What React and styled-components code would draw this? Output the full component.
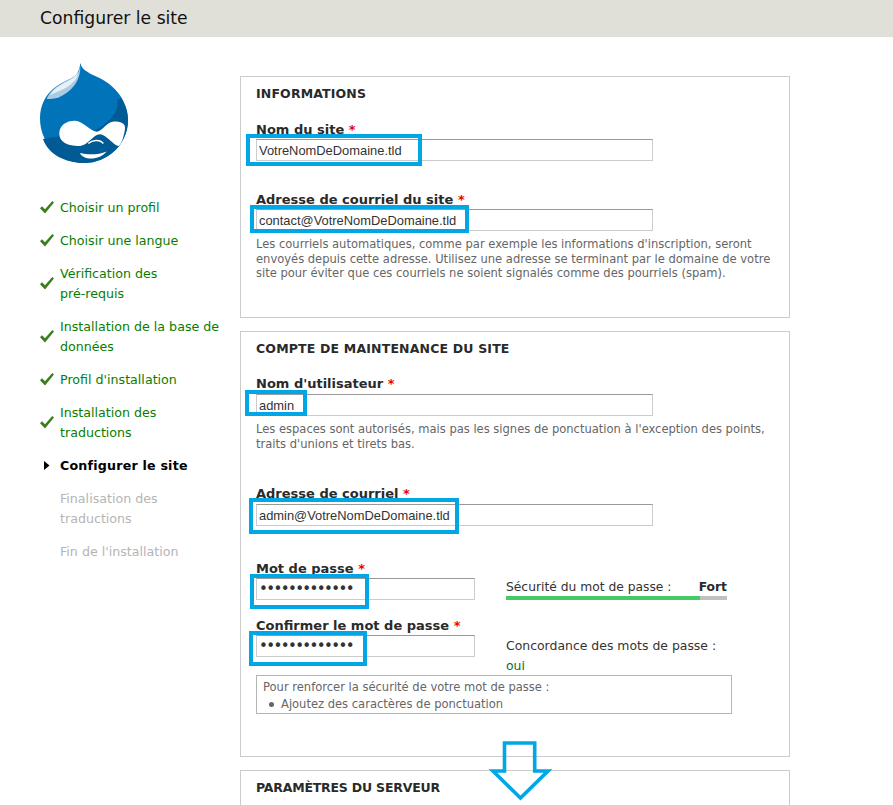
import React from "react";
import styled, { createGlobalStyle } from "styled-components";

const Global = createGlobalStyle`
  html, body { margin: 0; padding: 0; height: 805px; overflow: hidden; background: #fff; }
  body { font-family: "DejaVu Sans", Verdana, sans-serif; color: #333; }
  #root { height: 805px; overflow: hidden; }
`;

const Page = styled.div`position: relative; width: 893px; height: 805px; overflow: hidden;`;
const Header = styled.header`
  height: 37px; background: #e0dfd8; padding-left: 40px; display: flex; align-items: center;
`;
const Title = styled.h1`
  margin: 0; font-size: 17.2px; font-weight: 400; color: #111; line-height: 37px;
`;
const Body = styled.div`display: flex; padding-left: 40px;`;
const Sidebar = styled.aside`width: 200px; flex: none; padding-top: 26px;`;
const Logo = styled.svg`display: block; width: 88px; height: 100px;`;
const Steps = styled.ol`
  list-style: none; margin: 35px 0 0; padding: 0; display: flex; flex-direction: column; gap: 13px;
`;
const Step = styled.li`
  display: flex; align-items: center; width: 181px; font-size: 12.65px; line-height: 20px;
  font-weight: ${(p) => (p.$state === "active" ? 700 : 400)};
  letter-spacing: ${(p) => (p.$state === "active" ? 0.2 : 0)}px;
  color: ${(p) => (p.$state === "done" ? "#0a7d00" : p.$state === "active" ? "#000" : "#b5b5b5")};
`;
const StepMark = styled.span`width: 20px; flex: none; display: flex; align-items: center; margin-top: -2px;`;
const NoBreak = styled.span`white-space: nowrap;`;
const Main = styled.main`width: 550px; flex: none; padding-top: 39px; display: flex; flex-direction: column; gap: 13px;`;
const Panel = styled.section`
  box-sizing: border-box; border: 1px solid #ccc; padding: 0 15px; height: ${(p) => p.$h}px;
`;
const Legend = styled.h2`
  margin: 9px 0 0; font-size: 12.5px; line-height: 16px; font-weight: 700; color: #2a2a2a;
  letter-spacing: ${(p) => p.$ls || 0}px;
`;
const Field = styled.div`margin-top: ${(p) => p.$mt}px;`;
const Label = styled.label`
  display: block; font-size: 13px; font-weight: 700; color: #2a2a2a;
  line-height: ${(p) => (p.$low ? 16 : 14)}px;
  margin-bottom: ${(p) => (p.$low ? -2 : 0)}px;
`;
const Star = styled.span`color: #e00;`;
const Input = styled.input`
  display: block; box-sizing: border-box; width: ${(p) => p.$w}px; height: 22px; margin-top: 3px;
  padding: 0 2px; border: 1px solid #ccc; border-top-color: #999; outline: none; background: #fff;
  font-family: "Liberation Sans", Arial, sans-serif; font-size: 12.9px; color: #333; border-radius: 0;
  &[type="password"] {
    font-family: "DejaVu Sans", sans-serif; font-size: 15px; letter-spacing: -1.62px; padding-left: 2px;
  }
`;
const Help = styled.p`
  margin: 6px 0 0; font-size: 11.52px; line-height: 14.5px; color: #666; width: 520px;
`;
const PassRow = styled.div`display: flex; margin-top: ${(p) => p.$mt}px; height: ${(p) => p.$h}px;`;
const PassLeft = styled.div`width: 250px; flex: none;`;
const Strength = styled.div`width: 221px; padding-top: 18px; font-size: 12.3px; line-height: 16px; color: #333;`;
const StrengthText = styled.div`display: flex; justify-content: space-between;`;
const StrongWord = styled.strong`color: #2a2a2a;`;
const Meter = styled.div`height: 4px; margin-top: 1px; background: #c0c0c0;`;
const MeterFill = styled.div`height: 100%; background: #47c965;`;
const Match = styled.div`width: 235px; padding-top: 18px; font-size: 12.45px; line-height: 20px; color: #333;`;
const Yes = styled.div`color: #0a6d10; font-weight: 400;`;
const Tips = styled.div`
  box-sizing: border-box; width: 476px; height: 39px; margin-top: 7px; padding: 3px 6px 0;
  border: 1px solid #b5b5b5; font-size: 11.52px; line-height: 17px; color: #666;
`;
const TipList = styled.ul`list-style: none; margin: 0; padding: 0 0 0 6px;`;
const Tip = styled.li`
  display: flex; align-items: center; gap: 7px;
  &::before { content: ""; width: 5px; height: 5px; border-radius: 50%; background: #666; }
`;
const Mark = styled.div`
  position: absolute; box-sizing: border-box; border: 4px solid #00a6e6; pointer-events: none;
  left: ${(p) => p.$x}px; top: ${(p) => p.$y}px; width: ${(p) => p.$w}px; height: ${(p) => p.$h}px;
`;
const Arrow = styled.svg`position: absolute; left: 488px; top: 740px; width: 66px; height: 62px;`;

const Check = () => (
  <svg width="14" height="13" viewBox="0 0 14 13">
    <path d="M0 7.2 2 5.3 5 8.3 12.3 0 14 1.6 5 12.6Z" fill="#3c7d1e" />
  </svg>
);
const Play = () => (
  <svg width="14" height="9" viewBox="0 0 14 9">
    <path d="M4 0 9.5 4.5 4 9Z" fill="#000" />
  </svg>
);

const steps = [
  ["done", "Choisir un profil"],
  ["done", "Choisir une langue"],
  ["done", <>Vérification des <NoBreak>pré-requis</NoBreak></>],
  ["done", "Installation de la base de données"],
  ["done", "Profil d'installation"],
  ["done", "Installation des traductions"],
  ["active", "Configurer le site"],
  ["todo", "Finalisation des traductions"],
  ["todo", "Fin de l'installation"],
];

const marks = [
  [246, 134, 176, 32],
  [250, 205, 219, 28],
  [245, 390, 62, 26],
  [249, 498, 210, 36],
  [250, 574, 119, 35],
  [249, 631, 118, 35],
];

export default function App() {
  return (
    <Page>
      <Global />
      <Header><Title>Configurer le site</Title></Header>
      <Body>
        <Sidebar>
          <Logo viewBox="0 0 88 100">
            <path d="M40.3 0C41 4 44 7 47.3 8.7 51 11.5 56 13 60 15.3 75 23 88 38 88 57 88 81 68 100 44 100 19 100 0 80 0 55.5 0 43 5 33 13 26 20 20 29 17 35 13 38 10 40 5 40.3 0Z" fill="#0073b9" />
            <path d="M77 37C80 46 72 58 56 67L3 76C8 91 25 100 44 100 68 100 88 81 88 57 88 49 85 41 81 35 80 35 78 36 77 37Z" fill="#005a93" />
            <path d="M40 2C40 9 36 13 30 16 20 21 10 27 6.7 36 10 36 15 35.5 18.3 34.7 24 32 32 27 36 20 39 15 41 8 40 2Z" fill="#a9cbe3" />
            <path d="M38 9C36 14 30 17 24 20 18 23 13 27 10 32 16 29 24 27 30 22 35 18 38 14 38 9Z" fill="#e6f0f7" />
            <path d="M19.3 71C19 62 27 57.5 35 57.7 43 58 50 68 56.7 68.7 62 68.5 67 58.5 74 58.5 80 58.5 86 60 85 66 84 73 81 83 78.3 83 73 82 66 71.5 60 71.3 53 71.5 48 82.5 40 83 30 83.5 19.5 80 19.3 71Z" fill="#fff" />
            <path d="M48.3 80.5C52 77 60 76 63.3 80.5" fill="none" stroke="#fff" strokeWidth="1.6" />
            <path d="M40 90C48 92 58 92 66.7 88.5 63 93 57 95.5 51 95.5 46 95.5 41 93.5 40 90Z" fill="#fff" />
          </Logo>
          <Steps>
            {steps.map(([state, text], i) => (
              <Step key={i} $state={state}>
                <StepMark>{state === "done" ? <Check /> : state === "active" ? <Play /> : null}</StepMark>
                <span>{text}</span>
              </Step>
            ))}
          </Steps>
        </Sidebar>
        <Main>
          <Panel $h={242}>
            <Legend $ls={0.15}>INFORMATIONS</Legend>
            <Field $mt={20}>
              <Label $low>Nom du site <Star>*</Star></Label>
              <Input readOnly $w={397} value="VotreNomDeDomaine.tld" />
            </Field>
            <Field $mt={31}>
              <Label $low>Adresse de courriel du site <Star>*</Star></Label>
              <Input readOnly $w={397} value="contact@VotreNomDeDomaine.tld" />
              <Help>Les courriels automatiques, comme par exemple les informations d'inscription, seront envoyés depuis cette adresse. Utilisez une adresse se terminant par le domaine de votre site pour éviter que ces courriels ne soient signalés comme des pourriels (spam).</Help>
            </Field>
          </Panel>
          <Panel $h={426}>
            <Legend $ls={0.17}>COMPTE DE MAINTENANCE DU SITE</Legend>
            <Field $mt={20}>
              <Label>Nom d'utilisateur <Star>*</Star></Label>
              <Input readOnly $w={397} value="admin" />
              <Help>Les espaces sont autorisés, mais pas les signes de ponctuation à l'exception des points, traits d'unions et tirets bas.</Help>
            </Field>
            <Field $mt={36}>
              <Label>Adresse de courriel <Star>*</Star></Label>
              <Input readOnly $w={397} value="admin@VotreNomDeDomaine.tld" />
            </Field>
            <PassRow $mt={35} $h={57}>
              <PassLeft>
                <Label $low>Mot de passe <Star>*</Star></Label>
                <Input readOnly type="password" $w={219} value="aaaaaaaaaaaaa" />
              </PassLeft>
              <Strength>
                <StrengthText><span>Sécurité du mot de passe :</span><StrongWord>Fort</StrongWord></StrengthText>
                <Meter><MeterFill style={{ width: "88%" }} /></Meter>
              </Strength>
            </PassRow>
            <PassRow $mt={0} $h={50}>
              <PassLeft>
                <Label $low>Confirmer le mot de passe <Star>*</Star></Label>
                <Input readOnly type="password" $w={219} value="aaaaaaaaaaaaa" />
              </PassLeft>
              <Match>Concordance des mots de passe :<Yes>oui</Yes></Match>
            </PassRow>
            <Tips>
              Pour renforcer la sécurité de votre mot de passe :
              <TipList><Tip>Ajoutez des caractères de ponctuation</Tip></TipList>
            </Tips>
          </Panel>
          <Panel $h={80}>
            <Legend $ls={-0.2}>PARAMÈTRES DU SERVEUR</Legend>
          </Panel>
        </Main>
      </Body>
      {marks.map(([x, y, w, h]) => (
        <Mark key={y} $x={x} $y={y} $w={w} $h={h} />
      ))}
      <Arrow viewBox="0 0 66 62">
        <path d="M16.5 3H46.7V31H60L32.5 58 5 31H16.5Z" fill="none" stroke="#00a6e6" strokeWidth="3.6" strokeLinejoin="miter" />
      </Arrow>
    </Page>
  );
}
